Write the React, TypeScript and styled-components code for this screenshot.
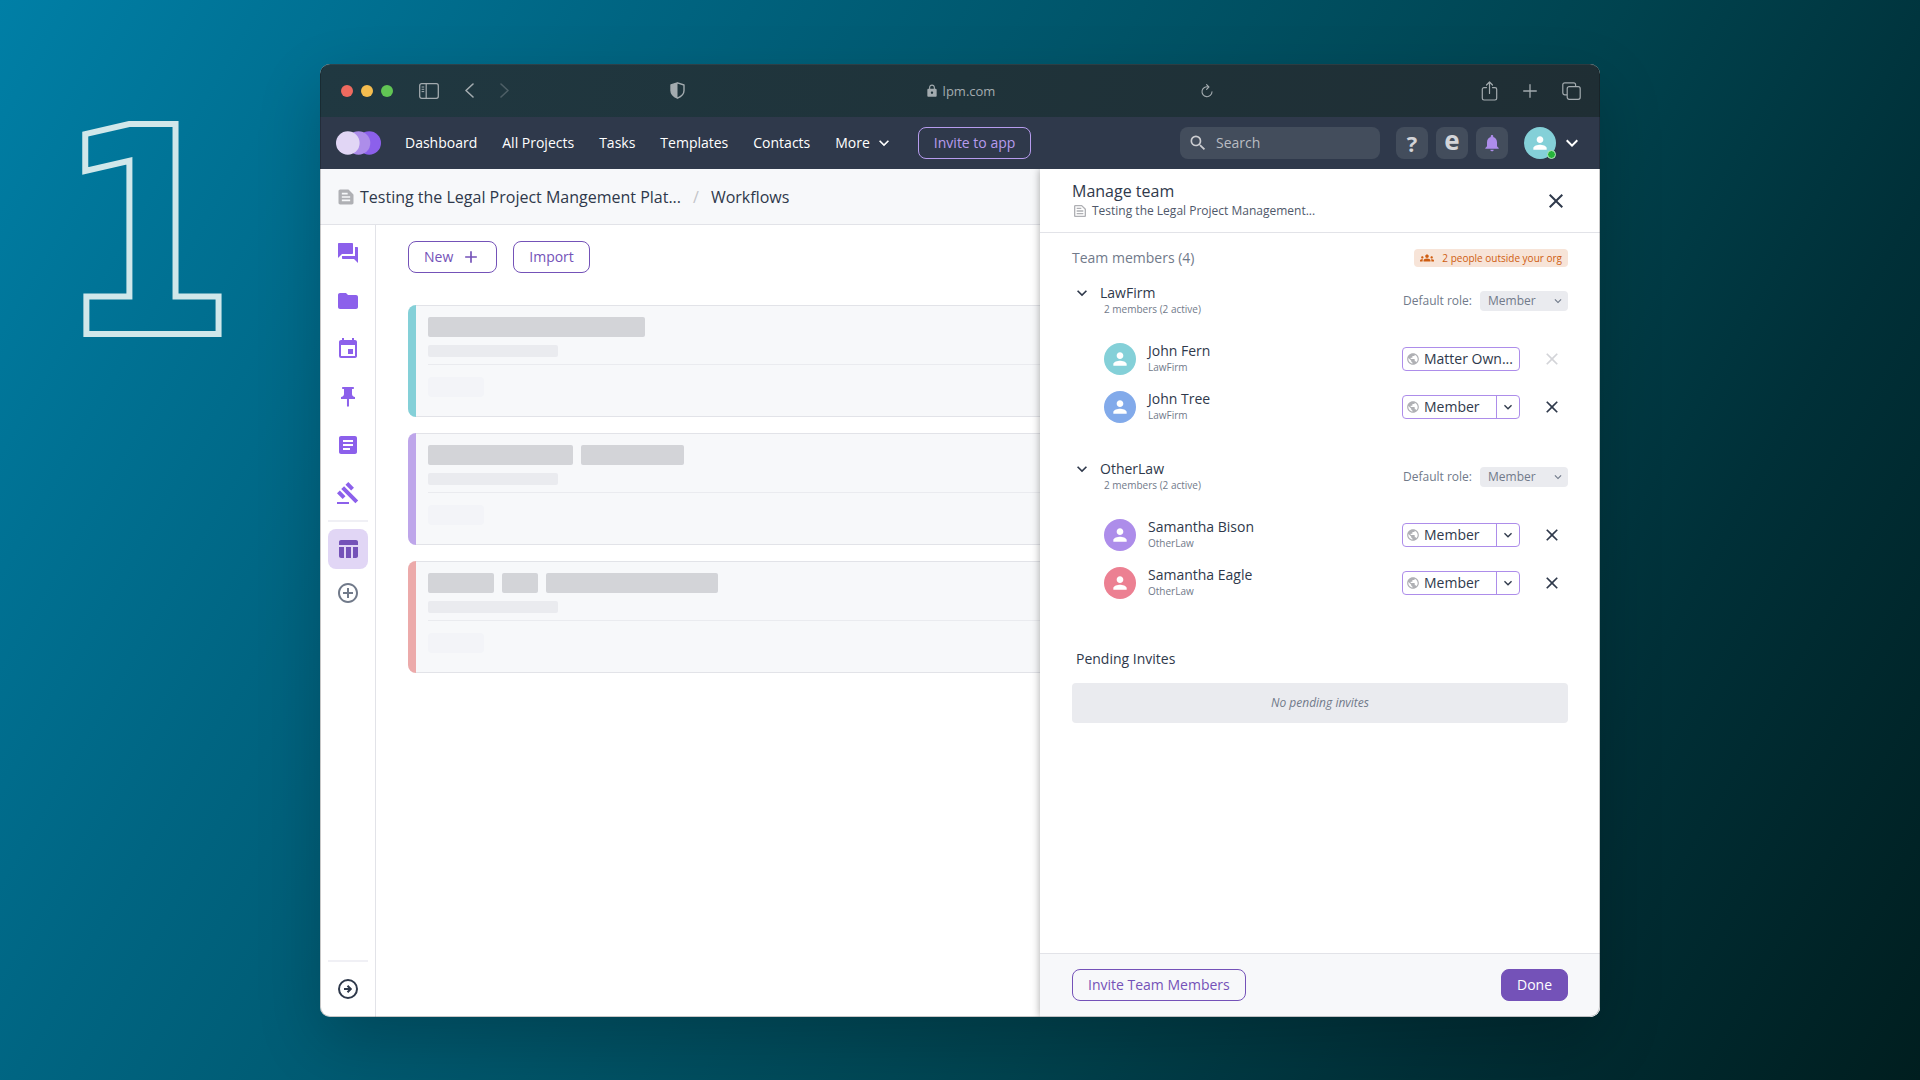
import React from 'react';
import styled, { createGlobalStyle } from 'styled-components';
import {
  MdAdd, MdAddCircleOutline, MdArticle, MdClose, MdEvent, MdExpandMore, MdFolder, MdForum, MdGavel, MdGroups,
  MdLock, MdNotifications, MdOutlineTextSnippet, MdPerson, MdPublic, MdPushPin, MdSearch, MdTableChart, MdTextSnippet,
} from 'react-icons/md';

const color = {
  ink: '#2f394b',
  muted: '#717a8a',
  grey: '#afb0b4',
  line: '#e2e3e8',
  surface: '#f7f8fa',
  fill: '#eaebef',
  purple: '#7452b8',
  violet: '#8c60eb',
  lilac: '#ad8dea',
  pale: '#e1d6f5',
  teal: '#84d0d8',
  chrome: '#a3abaf',
};

const GlobalStyle = createGlobalStyle`
  *, *::before, *::after { box-sizing: border-box; }
  body {
    margin: 0;
    font-family: "Open Sans", "Noto Sans", sans-serif;
    font-size: 14px;
    line-height: 20px;
    color: ${color.ink};
  }
  button, input, select { font: inherit; color: inherit; }
  button { cursor: pointer; }
  h1, h2, h3, p, ul { margin: 0; padding: 0; font-weight: 400; }
  ul { list-style: none; }
  a { color: inherit; text-decoration: none; }
  svg { display: block; flex: none; }
`;

const Stage = styled.div`
  min-height: 100vh;
  padding: 64px 0 63px;
  display: grid;
  grid-template-columns: minmax(0, 1fr) minmax(0, 4fr) minmax(0, 1fr);
  background: linear-gradient(120deg, #007fa6 0%, #007193 13%, #006582 25%, #005468 45%, #00434f 64%, #003038 80%, #001e1f 100%);
`;

const StepNumber = styled.div`
  padding: 31px 0 0 56px;
  font-family: "DejaVu Sans Condensed", "DejaVu Sans", sans-serif;
  font-size: 288px;
  font-weight: 700;
  line-height: 280px;
  color: transparent;
  -webkit-text-stroke: 6px #d0e7ea;
`;

const Window = styled.div`
  position: relative;
  display: flex;
  flex-direction: column;
  overflow: hidden;
  border-radius: 10px;
  background: #fff;
  box-shadow: 0 24px 64px rgba(0, 0, 0, 0.2);
  &::after {
    content: "";
    position: absolute;
    inset: 0;
    border: 1px solid rgba(0, 0, 0, 0.22);
    border-top-color: rgba(255, 255, 255, 0.06);
    border-radius: 10px;
    pointer-events: none;
    z-index: 3;
  }
`;

/* Browser chrome */

const Chrome = styled.div`
  height: 53px;
  display: grid;
  grid-template-columns: minmax(0, 1fr) auto minmax(0, 1fr);
  align-items: center;
  color: ${color.chrome};
  background: linear-gradient(100deg, #203841, #1f333a 50%, #1f2e34);
`;

const ChromeSide = styled.div<{ $end?: boolean }>`
  display: flex;
  align-items: center;
  justify-content: space-between;
  padding: ${p => (p.$end ? '0 19px 0 206px' : '0 240px 0 21px')};
`;

const ChromeGroup = styled.div<{ $gap: number }>`
  display: flex;
  align-items: center;
  gap: ${p => p.$gap}px;
`;

const Dot = styled.span<{ $tone: string }>`
  width: 12px;
  height: 12px;
  border-radius: 50%;
  background: ${p => p.$tone};
`;

const ChromeButton = styled.button`
  padding: 0;
  border: 0;
  background: none;
  color: ${color.chrome};
  &:disabled { opacity: 0.35; }
`;

const Site = styled.div`
  display: flex;
  align-items: center;
  gap: 4px;
  font-size: 13px;
`;

/* Application bar */

const AppBar = styled.header`
  height: 52px;
  padding: 0 16px;
  display: flex;
  align-items: center;
  gap: 24px;
  color: #fff;
  background: ${color.ink};
`;

const NavLinks = styled.nav`
  display: flex;
  gap: 25px;
`;

const NavLink = styled.a`
  display: flex;
  align-items: center;
  gap: 4px;
  white-space: nowrap;
`;

const Button = styled.button<{ $tone?: string; $solid?: boolean }>`
  height: 32px;
  padding: 0 15px;
  display: flex;
  align-items: center;
  gap: 8px;
  white-space: nowrap;
  border: 1px solid ${p => p.$tone ?? color.purple};
  border-radius: 8px;
  color: ${p => (p.$solid ? '#fff' : p.$tone ?? color.purple)};
  background: ${p => (p.$solid ? color.purple : 'transparent')};
`;

const AppTools = styled.div`
  margin-left: auto;
  display: flex;
  align-items: center;
  gap: 16px;
`;

const SearchBox = styled.label`
  width: 200px;
  height: 32px;
  padding: 0 8px;
  display: flex;
  align-items: center;
  gap: 8px;
  border-radius: 8px;
  color: #cbccd0;
  background: #434d5c;
`;

const SearchInput = styled.input`
  width: 100%;
  padding: 0;
  border: 0;
  outline: 0;
  background: none;
  &::placeholder { color: #b9bcc2; opacity: 1; }
`;

const ToolRow = styled.div`
  display: flex;
  gap: 8px;
`;

const ToolButton = styled.button<{ $lower?: boolean }>`
  width: 32px;
  height: 32px;
  padding: ${p => (p.$lower ? '0 0 6px' : '0')};
  display: grid;
  place-items: center;
  border: 0;
  border-radius: 8px;
  font-size: ${p => (p.$lower ? 26 : 22)}px;
  font-weight: 700;
  color: #d3d4d8;
  background: #434d5c;
`;

const AccountButton = styled.button`
  padding: 0;
  display: flex;
  align-items: center;
  gap: 4px;
  border: 0;
  background: none;
`;

const Avatar = styled.span<{ $tone: string }>`
  position: relative;
  width: 32px;
  height: 32px;
  display: grid;
  place-items: center;
  flex: none;
  border-radius: 50%;
  color: #fff;
  background: ${p => p.$tone};
`;

const OnlineBadge = styled.span`
  position: absolute;
  right: 0;
  bottom: 0;
  width: 9px;
  height: 9px;
  border: 1px solid #b8e6c0;
  border-radius: 50%;
  background: #26b53a;
`;

/* Workspace */

const Workspace = styled.div`
  position: relative;
  flex: 1;
  display: flex;
  flex-direction: column;
`;

const Breadcrumb = styled.nav`
  height: 56px;
  padding: 0 16px;
  display: flex;
  align-items: center;
  gap: 12px;
  border-bottom: 1px solid ${color.line};
  font-size: 16px;
  background: ${color.surface};
`;

const Crumb = styled.a`
  display: flex;
  align-items: center;
  gap: 4px;
  svg { color: ${color.grey}; }
`;

const Slash = styled.span`
  color: #c3c4c8;
`;

const Columns = styled.div`
  flex: 1;
  display: flex;
`;

const Rail = styled.nav`
  width: 56px;
  padding: 4px 0;
  display: flex;
  flex-direction: column;
  align-items: center;
  border-right: 1px solid ${color.line};
`;

const RailLink = styled.a<{ $tone?: string }>`
  width: 48px;
  height: 48px;
  display: grid;
  place-items: center;
  color: ${p => p.$tone ?? color.violet};
`;

const RailCurrent = styled.a`
  width: 40px;
  height: 40px;
  display: grid;
  place-items: center;
  border-radius: 8px;
  color: ${color.purple};
  background: ${color.pale};
`;

const RailRule = styled.hr<{ $bottom?: boolean }>`
  width: 40px;
  height: 2px;
  margin: ${p => (p.$bottom ? 'auto 0 3px' : '3px 0 7px')};
  border: 0;
  background: #f0f0f5;
`;

const Main = styled.main`
  flex: 1;
  min-width: 0;
  padding: 16px 32px;
`;

const Actions = styled.div`
  display: flex;
  gap: 16px;
  margin-bottom: 32px;
`;

const CardList = styled.div`
  display: grid;
  gap: 16px;
`;

const Card = styled.article<{ $tone: string }>`
  height: 112px;
  display: flex;
  overflow: hidden;
  border-radius: 8px;
  background: ${color.surface};
  &::before {
    content: "";
    width: 8px;
    background: ${p => p.$tone};
  }
`;

const CardBody = styled.div`
  flex: 1;
  padding: 11px 12px;
  border: 1px solid ${color.line};
  border-left: 0;
`;

const BarRow = styled.div`
  display: flex;
  gap: 8px;
  margin-bottom: 8px;
`;

const Bar = styled.div<{ $width: number; $kind: 'title' | 'line' | 'chip' }>`
  width: ${p => p.$width}px;
  height: ${p => (p.$kind === 'line' ? 12 : 20)}px;
  border-radius: ${p => (p.$kind === 'chip' ? 4 : 2)}px;
  background: ${p => ({ title: '#d3d4d8', line: color.fill, chip: '#f3f4f8' })[p.$kind]};
`;

const CardRule = styled.hr`
  height: 1px;
  margin: 7px 0 12px;
  border: 0;
  background: ${color.fill};
`;

/* Manage team drawer */

const Drawer = styled.aside`
  position: absolute;
  top: 0;
  right: 0;
  bottom: 0;
  width: 560px;
  display: flex;
  flex-direction: column;
  background: #fff;
  box-shadow: 0 0 8px rgba(0, 0, 0, 0.35);
  clip-path: inset(0 0 0 -12px);
`;

const DrawerHead = styled.div`
  height: 64px;
  padding: 0 32px;
  display: flex;
  align-items: center;
  justify-content: space-between;
  border-bottom: 1px solid ${color.line};
`;

const DrawerTitle = styled.h1`
  font-size: 16px;
  line-height: 20px;
`;

const DrawerSubtitle = styled.p`
  display: flex;
  align-items: center;
  gap: 4px;
  font-size: 12px;
  line-height: 20px;
  color: #4f586a;
  svg { color: ${color.grey}; }
`;

const IconButton = styled.button`
  width: 24px;
  height: 24px;
  padding: 0;
  display: grid;
  place-items: center;
  border: 0;
  color: ${color.ink};
  background: none;
  &:disabled { color: #d3d4d8; }
`;

const DrawerBody = styled.div`
  flex: 1;
  padding: 16px 32px;
`;

const TeamHead = styled.div`
  display: flex;
  align-items: center;
  justify-content: space-between;
  height: 18px;
  margin-bottom: 16px;
`;

const TeamTitle = styled.h2`
  font-size: 14px;
  color: ${color.muted};
`;

const OutsideBadge = styled.span`
  height: 18px;
  padding: 0 6px;
  display: flex;
  align-items: center;
  gap: 8px;
  border-radius: 4px;
  font-size: 10px;
  color: #cf5c10;
  background: #f7e4d8;
`;

const Groups = styled.div`
  display: grid;
  gap: 36px;
`;

const GroupHead = styled.div`
  min-height: 36px;
  margin-bottom: 24px;
  display: flex;
  gap: 8px;
`;

const Collapse = styled.button`
  width: 20px;
  height: 20px;
  padding: 0;
  border: 0;
  background: none;
`;

const GroupName = styled.h3`
  font-size: 14px;
`;

const GroupCount = styled.p`
  padding-left: 4px;
  font-size: 10px;
  line-height: 12px;
  color: ${color.muted};
`;

const DefaultRole = styled.label`
  margin-left: auto;
  display: flex;
  align-items: center;
  gap: 8px;
  font-size: 12px;
  color: ${color.muted};
`;

const SmallSelect = styled.span`
  width: 88px;
  height: 20px;
  padding: 0 3px 0 8px;
  display: flex;
  align-items: center;
  border-radius: 4px;
  background: ${color.fill};
`;

const Select = styled.select`
  flex: 1;
  min-width: 0;
  height: 100%;
  padding: 0;
  border: 0;
  outline: 0;
  appearance: none;
  background: none;
  &:disabled { opacity: 1; color: inherit; }
`;

const Members = styled.ul`
  padding-left: 32px;
  display: grid;
  gap: 16px;
`;

const Member = styled.li`
  height: 32px;
  padding-right: 4px;
  display: flex;
  align-items: center;
`;

const MemberText = styled.div`
  flex: 1;
  padding-left: 12px;
  line-height: 16px;
`;

const MemberOrg = styled.p`
  font-size: 10px;
  color: ${color.muted};
`;

const RoleField = styled.div`
  width: 118px;
  height: 24px;
  margin-right: 20px;
  display: flex;
  align-items: center;
  border: 1px solid ${color.lilac};
  border-radius: 4px;
  > svg { margin: 0 4px 0 3px; color: ${color.grey}; }
`;

const RoleArrow = styled.span`
  width: 23px;
  height: 100%;
  display: grid;
  place-items: center;
  border-left: 1px solid ${color.lilac};
`;

const PendingTitle = styled.h2`
  margin: 50px 0 14px;
  padding-left: 4px;
  font-size: 14px;
`;

const PendingEmpty = styled.p`
  padding: 10px;
  border-radius: 4px;
  font-size: 12px;
  font-style: italic;
  text-align: center;
  color: ${color.muted};
  background: ${color.fill};
`;

const DrawerFoot = styled.footer`
  padding: 15px 32px 16px;
  display: flex;
  justify-content: space-between;
  border-top: 1px solid ${color.line};
  background: ${color.surface};
`;

/* Drawings */

const SidebarIcon = () => (
  <svg width="20" height="16" viewBox="0 0 20 16" fill="none" stroke="currentColor">
    <rect x="0.7" y="0.7" width="18.6" height="14.6" rx="2" strokeWidth="1.3" />
    <path d="M7.2 1v14" strokeWidth="1.2" />
    <path d="M2.6 4h2.6M2.6 6.3h2.6M2.6 8.6h2.6" strokeWidth="1" />
  </svg>
);

const ArrowIcon = ({ flip }: { flip?: boolean }) => (
  <svg width="9" height="15" viewBox="0 0 9 15" fill="none" stroke="currentColor" strokeWidth="1.6" strokeLinecap="round" strokeLinejoin="round">
    <path d={flip ? 'M1 1l7 6.5L1 14' : 'M8 1L1 7.5 8 14'} />
  </svg>
);

const ShieldIcon = () => (
  <svg width="15" height="17" viewBox="0 0 15 17" fill="none">
    <path d="M7.5 0.8L14 3v5.5c0 3.6-2.6 6-6.5 7.7C3.6 14.5 1 12.1 1 8.5V3z" stroke="currentColor" strokeWidth="1.4" strokeLinejoin="round" />
    <path d="M7.5 0.8L1 3v5.5c0 3.6 2.6 6 6.5 7.7z" fill="currentColor" />
  </svg>
);

const ReloadIcon = () => (
  <svg width="12" height="14" viewBox="0 0 12 14" fill="none" stroke="currentColor" strokeWidth="1.1" strokeLinecap="round" strokeLinejoin="round">
    <path d="M7.4 2.9A5 5 0 1 0 11 7.8" />
    <path d="M5.6 0.7L7.9 3 5.6 5.3" />
  </svg>
);

const ShareIcon = () => (
  <svg width="17" height="20" viewBox="0 0 17 20" fill="none" stroke="currentColor" strokeWidth="1.2" strokeLinecap="round" strokeLinejoin="round">
    <path d="M5.5 6.6H3a1.7 1.7 0 0 0-1.7 1.7v9A1.7 1.7 0 0 0 3 19h11a1.7 1.7 0 0 0 1.7-1.7v-9A1.7 1.7 0 0 0 14 6.6h-2.5" />
    <path d="M8.5 12.5V1M5.5 4l3-3 3 3" />
  </svg>
);

const PlusIcon = () => (
  <svg width="14" height="14" viewBox="0 0 14 14" fill="none" stroke="currentColor" strokeWidth="1.3" strokeLinecap="round">
    <path d="M7 0.7v12.6M0.7 7h12.6" />
  </svg>
);

const TabsIcon = () => (
  <svg width="19" height="18" viewBox="0 0 19 18" fill="none" stroke="currentColor" strokeWidth="1.2">
    <rect x="5.2" y="4.7" width="13" height="12.6" rx="2" />
    <path d="M5 12.8H2.8a2 2 0 0 1-2-2V2.800a2 2 0 0 1 2-2h8.800a2 2 0 0 1 2 2v1.700" />
  </svg>
);

const Logo = () => (
  <svg width="45" height="24" viewBox="0 0 45 24">
    <circle cx="33.2" cy="12" r="11.8" fill={color.violet} />
    <circle cx="22.5" cy="12" r="11.8" fill={color.lilac} />
    <circle cx="11.8" cy="12" r="11.8" fill={color.pale} />
  </svg>
);

const ExpandRailIcon = () => (
  <svg width="20" height="20" viewBox="0 0 20 20" fill="none" stroke="currentColor" strokeWidth="2">
    <circle cx="10" cy="10" r="9" />
    <path d="M6 10h6.500M9.500 6.700L12.800 10l-3.300 3.300" />
  </svg>
);

/* Data */

const railItems = [
  { label: 'Messages', Icon: MdForum },
  { label: 'Files', Icon: MdFolder },
  { label: 'Calendar', Icon: MdEvent },
  { label: 'Pinned', Icon: MdPushPin },
  { label: 'Notes', Icon: MdArticle },
  { label: 'Rulings', Icon: MdGavel },
];

const cards = [
  { tone: color.teal, bars: [217] },
  { tone: '#bea6ea', bars: [145, 103] },
  { tone: '#ecaaaa', bars: [66, 36, 172] },
];

const groups = [
  {
    name: 'LawFirm',
    members: [
      { name: 'John Fern', tone: color.teal, owner: true },
      { name: 'John Tree', tone: '#82aaea', owner: false },
    ],
  },
  {
    name: 'OtherLaw',
    members: [
      { name: 'Samantha Bison', tone: color.lilac, owner: false },
      { name: 'Samantha Eagle', tone: '#ec8092', owner: false },
    ],
  },
];

function BrowserChrome() {
  return (
    <Chrome>
      <ChromeSide>
        <ChromeGroup $gap={26}>
          <ChromeGroup $gap={8}>
            <Dot $tone="#ee6a5f" />
            <Dot $tone="#f5bd4f" />
            <Dot $tone="#61c554" />
          </ChromeGroup>
          <ChromeButton aria-label="Toggle sidebar"><SidebarIcon /></ChromeButton>
          <ChromeButton aria-label="Back"><ArrowIcon /></ChromeButton>
          <ChromeButton aria-label="Forward" disabled><ArrowIcon flip /></ChromeButton>
        </ChromeGroup>
        <ShieldIcon />
      </ChromeSide>
      <Site><MdLock size={14} />lpm.com</Site>
      <ChromeSide $end>
        <ChromeButton aria-label="Reload"><ReloadIcon /></ChromeButton>
        <ChromeGroup $gap={25}>
          <ChromeButton aria-label="Share"><ShareIcon /></ChromeButton>
          <ChromeButton aria-label="New tab"><PlusIcon /></ChromeButton>
          <ChromeButton aria-label="Tabs"><TabsIcon /></ChromeButton>
        </ChromeGroup>
      </ChromeSide>
    </Chrome>
  );
}

function TopNav() {
  return (
    <AppBar>
      <Logo />
      <NavLinks>
        {['Dashboard', 'All Projects', 'Tasks', 'Templates', 'Contacts'].map(item => (
          <NavLink href="#" key={item}>{item}</NavLink>
        ))}
        <NavLink href="#">More<MdExpandMore size={20} /></NavLink>
      </NavLinks>
      <Button $tone="#b79cee">Invite to app</Button>
      <AppTools>
        <SearchBox>
          <MdSearch size={20} />
          <SearchInput type="text" placeholder="Search" aria-label="Search" />
        </SearchBox>
        <ToolRow>
          <ToolButton>?</ToolButton>
          <ToolButton $lower>e</ToolButton>
          <ToolButton aria-label="Notifications"><MdNotifications size={20} color={color.lilac} /></ToolButton>
        </ToolRow>
        <AccountButton aria-label="Account">
          <Avatar $tone={color.teal}><MdPerson size={20} /><OnlineBadge /></Avatar>
          <MdExpandMore size={24} color="#fff" />
        </AccountButton>
      </AppTools>
    </AppBar>
  );
}

function SideRail() {
  return (
    <Rail>
      {railItems.map(({ label, Icon }) => (
        <RailLink href="#" key={label} aria-label={label}><Icon size={24} /></RailLink>
      ))}
      <RailRule />
      <RailCurrent href="#" aria-label="Workflows"><MdTableChart size={24} /></RailCurrent>
      <RailLink href="#" aria-label="Add" $tone="#717a8a"><MdAddCircleOutline size={24} /></RailLink>
      <RailRule $bottom />
      <RailLink href="#" aria-label="Expand" $tone={color.ink}><ExpandRailIcon /></RailLink>
    </Rail>
  );
}

function TeamDrawer() {
  return (
    <Drawer>
      <DrawerHead>
        <div>
          <DrawerTitle>Manage team</DrawerTitle>
          <DrawerSubtitle><MdOutlineTextSnippet size={16} />Testing the Legal Project Management...</DrawerSubtitle>
        </div>
        <IconButton aria-label="Close"><MdClose size={24} /></IconButton>
      </DrawerHead>
      <DrawerBody>
        <TeamHead>
          <TeamTitle>Team members (4)</TeamTitle>
          <OutsideBadge><MdGroups size={14} />2 people outside your org</OutsideBadge>
        </TeamHead>
        <Groups>
          {groups.map(group => (
            <section key={group.name}>
              <GroupHead>
                <Collapse aria-label={`Collapse ${group.name}`}><MdExpandMore size={20} /></Collapse>
                <div>
                  <GroupName>{group.name}</GroupName>
                  <GroupCount>2 members (2 active)</GroupCount>
                </div>
                <DefaultRole>
                  Default role:
                  <SmallSelect>
                    <Select defaultValue="Member"><option>Member</option></Select>
                    <MdExpandMore size={14} />
                  </SmallSelect>
                </DefaultRole>
              </GroupHead>
              <Members>
                {group.members.map(member => (
                  <Member key={member.name}>
                    <Avatar $tone={member.tone}><MdPerson size={20} /></Avatar>
                    <MemberText>
                      <p>{member.name}</p>
                      <MemberOrg>{group.name}</MemberOrg>
                    </MemberText>
                    <RoleField>
                      <MdPublic size={14} />
                      <Select aria-label={`Role of ${member.name}`} disabled={member.owner}>
                        <option>{member.owner ? 'Matter Own...' : 'Member'}</option>
                      </Select>
                      {!member.owner && <RoleArrow><MdExpandMore size={16} /></RoleArrow>}
                    </RoleField>
                    <IconButton aria-label={`Remove ${member.name}`} disabled={member.owner}><MdClose size={20} /></IconButton>
                  </Member>
                ))}
              </Members>
            </section>
          ))}
        </Groups>
        <PendingTitle>Pending Invites</PendingTitle>
        <PendingEmpty>No pending invites</PendingEmpty>
      </DrawerBody>
      <DrawerFoot>
        <Button>Invite Team Members</Button>
        <Button $solid>Done</Button>
      </DrawerFoot>
    </Drawer>
  );
}

export default function App() {
  return (
    <>
      <GlobalStyle />
      <Stage>
        <StepNumber>1</StepNumber>
        <Window>
          <BrowserChrome />
          <TopNav />
          <Workspace>
            <Breadcrumb>
              <Crumb href="#"><MdTextSnippet size={20} />Testing the Legal Project Mangement Plat...</Crumb>
              <Slash>/</Slash>
              <Crumb href="#">Workflows</Crumb>
            </Breadcrumb>
            <Columns>
              <SideRail />
              <Main>
                <Actions>
                  <Button>New<MdAdd size={20} /></Button>
                  <Button>Import</Button>
                </Actions>
                <CardList>
                  {cards.map(card => (
                    <Card key={card.tone} $tone={card.tone}>
                      <CardBody>
                        <BarRow>
                          {card.bars.map(width => <Bar key={width} $width={width} $kind="title" />)}
                        </BarRow>
                        <Bar $width={130} $kind="line" />
                        <CardRule />
                        <Bar $width={56} $kind="chip" />
                      </CardBody>
                    </Card>
                  ))}
                </CardList>
              </Main>
            </Columns>
            <TeamDrawer />
          </Workspace>
        </Window>
      </Stage>
    </>
  );
}
